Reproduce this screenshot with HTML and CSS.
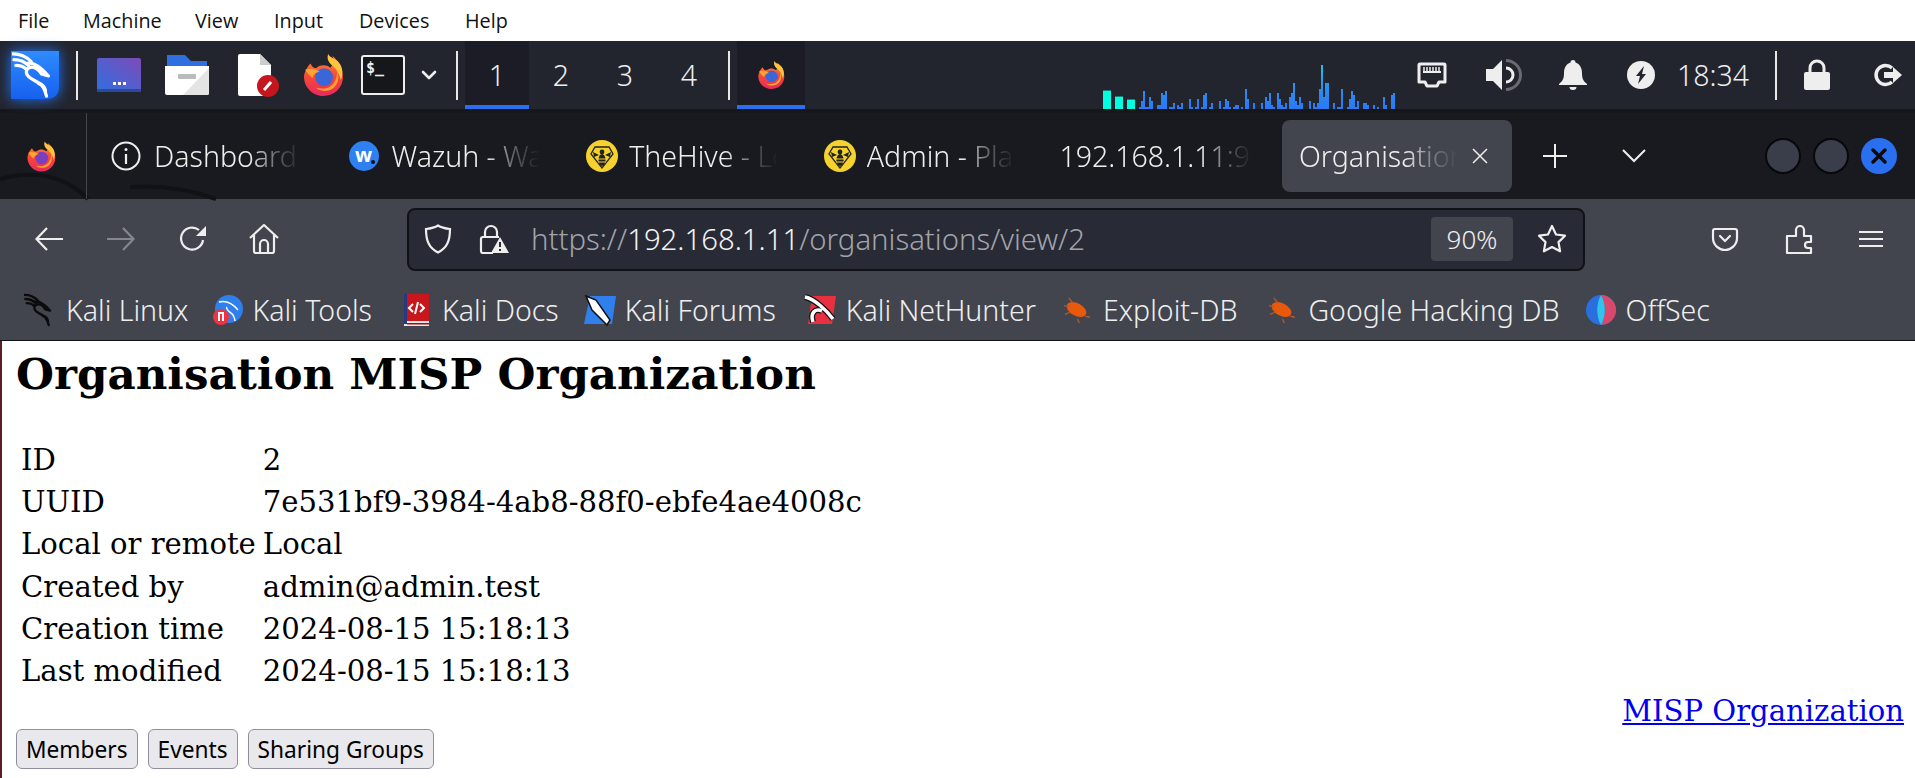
FILE: index.html
```html
<!DOCTYPE html>
<html lang="en">
<head>
<meta charset="utf-8">
<title>Organisation MISP Organization</title>
<link rel="stylesheet" href="styles.css">
</head>
<body>
<svg class="defs" width="0" height="0" aria-hidden="true">
  <defs>
    <linearGradient id="ffBody" x1="0" y1="0" x2="0" y2="1"><stop offset="0" stop-color="#ff8a2a"/><stop offset=".55" stop-color="#f5453a"/><stop offset="1" stop-color="#e8295f"/></linearGradient>
    <linearGradient id="launch" x1="0" y1="0" x2="0" y2="1"><stop offset="0" stop-color="#2f8bff"/><stop offset="1" stop-color="#1660ee"/></linearGradient>
    <linearGradient id="winGrad" x1="0" y1="1" x2="1" y2="0"><stop offset="0" stop-color="#2f6fe0"/><stop offset="1" stop-color="#7d4bb8"/></linearGradient>
    <linearGradient id="barGrad" gradientUnits="userSpaceOnUse" x1="0" y1="0" x2="0" y2="44"><stop offset="0" stop-color="#19c6ea"/><stop offset=".5" stop-color="#2a90f0"/><stop offset="1" stop-color="#2a78f5"/></linearGradient>
    <symbol id="firefox" viewBox="0 0 40 40">
      <path fill="url(#ffBody)" d="M2 20C1 31 10 40 20 40c11 0 19-8 19-18 0-8-4-15-10-20 2 5 1 8-2 11-4-3-9-3-13 0-2 1-4 0-6-4-3 3-5 7-6 11z"/>
      <path fill="#ffc43f" d="M25 0c-2 5 1 9 5 12 4 4 6 8 7 13 3-8 1-14-3-18-3-3-7-3-9-7z"/>
      <path fill="#ff9f2e" d="M33 15c3 6 2 14-4 18-5 3-12 3-16-1 6 2 13 1 17-4 3-4 4-9 3-13z"/>
      <circle class="ff-core" cx="21" cy="22" r="8.5"/>
      <path fill="#ffa52e" d="M3 15c5-2 10-1 14 2-3 0-6 2-7 6-3-3-5-5-7-8z"/>
    </symbol>
    <symbol id="dragon" viewBox="0 0 48 48">
      <g fill="none" stroke="currentColor" stroke-width="3.4" stroke-linecap="round" stroke-linejoin="round">
        <path d="M1 2c8 0 14 3 19 8M2 8c6 0 11 2 15 6M4 14c4 0 8 1 11 4"/>
        <path d="M15 12c8-2 15 4 23 13l-7-2c-3-5-8-8-12-7-4 1-5 5-3 8 3 5 11 6 15 11 3 3 4 7 5 11"/>
        <path d="M28 33c3 0 6 3 7 7"/>
      </g>
    </symbol>
    <symbol id="hive" viewBox="0 0 32 32">
      <circle cx="16" cy="16" r="16" fill="#f6d22f"/>
      <path fill="none" stroke="#222" stroke-width="1.3" d="M9 7h14l4 7-11 14L5 14z"/>
      <ellipse cx="16" cy="20" rx="3.600" ry="6" fill="#222"/>
      <path stroke="#f6d22f" stroke-width="1.2" d="M12 19h8M12 22h8"/>
      <path fill="#222" d="M13 15l-6-3 1 5zM19 15l6-3-1 5z"/>
      <circle cx="16" cy="12" r="2.400" fill="#222"/>
    </symbol>
    <symbol id="bug" viewBox="0 0 30 30">
      <ellipse cx="15" cy="15" rx="11" ry="6.5" fill="#e8590c" transform="rotate(28 15 15)"/>
      <path stroke="#a85a30" stroke-width="1.4" d="M2 11l5 1M7 3l4 5M16 25l2 4M24 22l5 1M3 20l5-2"/>
    </symbol>
  </defs>
</svg>

<header class="menubar">
  <span>File</span><span>Machine</span><span>View</span><span>Input</span><span>Devices</span><span>Help</span>
</header>

<div class="panel">
  <svg class="launcher" viewBox="0 0 48 48"><path fill="url(#launch)" d="M0 0h48v36c0 7-4 12-12 12H0z"/><use href="#dragon" width="46" height="46" x="1" y="1" color="#fff"/></svg>
  <i class="vsep sep-a"></i>
  <svg class="app app-win" viewBox="0 0 44 34"><rect width="44" height="34" rx="2" fill="url(#winGrad)"/><rect y="31" width="44" height="3" fill="#2b4b9a"/><path fill="#fff" d="M16 24h3v3h-3zM21 24h3v3h-3zM26 24h3v3h-3z"/></svg>
  <svg class="app app-folder" viewBox="0 0 44 40"><path fill="#2f6fe0" d="M2 0h18l6 6h16v10H2z"/><path fill="#fff" d="M0 11h44v27a2 2 0 0 1-2 2H2a2 2 0 0 1-2-2z"/><path fill="#e4e4e4" d="M44 13v25a2 2 0 0 1-2 2H18z"/><rect x="13" y="19" width="18" height="5" rx="1" fill="#bbb"/></svg>
  <svg class="app app-doc" viewBox="0 0 41 42"><path fill="#fff" d="M0 2a2 2 0 0 1 2-2h20l11 11v31H2a2 2 0 0 1-2-2z"/><path fill="#ccc" d="M22 0l11 11H22z"/><circle cx="30" cy="32" r="11" fill="#c4161c"/><path stroke="#fff" stroke-width="3" d="M26 36l7-8"/></svg>
  <svg class="app app-fox"><use href="#firefox"/></svg>
  <svg class="app app-term" viewBox="0 0 44 40"><rect x="1" y="1" width="42" height="38" rx="2" fill="#16171a" stroke="#eee" stroke-width="2"/><text x="5" y="18" class="term-text">$_</text></svg>
  <svg class="app app-chev" viewBox="0 0 16 10"><path fill="none" stroke="#eee" stroke-width="2.6" stroke-linecap="round" stroke-linejoin="round" d="M2 2l6 6 6-6"/></svg>
  <i class="vsep sep-b"></i>
  <nav class="workspaces"><span class="ws ws-on">1</span><span class="ws">2</span><span class="ws">3</span><span class="ws">4</span></nav>
  <i class="vsep sep-c"></i>
  <div class="task"><svg class="task-fox"><use href="#firefox"/></svg></div>
  <svg class="graph" viewBox="0 0 292 44">
    <path fill="#00ffe0" d="M0 44V26h8v18zM12 44V32h8v12zM24 44V35h8v9z"/>
    <path fill="#1c7f74" d="M0 25h8v1H0zM12 31h8v1h-8zM24 34h8v1h-8z"/>
    <path fill="url(#barGrad)" d="M36 44v-2h2v2zM38 44v-8h2v8zM40 44V26h2v18zM42 44v-2h2v2zM44 44v-2h2v2zM46 44V32h2v12zM48 44v-8h2v8zM54 44v-4h4v4zM58 44V28h2v16zM60 44V30h2v14zM62 44V26h2v18zM66 44v-2h4v2zM70 44v-6h2v6zM74 44v-4h2v4zM76 44v-2h2v2zM78 44v-6h2v6zM86 44V34h2v10zM88 44v-2h2v2zM92 44v-2h2v2zM94 44V34h2v10zM98 44v-2h2v2zM100 44V30h2v14zM102 44V28h2v16zM106 44v-2h2v2zM108 44v-6h2v6zM116 44v-8h2v8zM120 44v-2h2v2zM122 44V34h2v10zM124 44v-8h2v8zM126 44v-2h2v2zM130 44v-2h2v2zM132 44v-4h4v4zM138 44v-2h2v2zM142 44V24h2v20zM144 44V34h2v10zM150 44v-6h2v6zM158 44v-6h2v6zM162 44V32h2v12zM164 44v-8h2v8zM166 44V28h2v16zM168 44v-4h2v4zM170 44v-2h2v2zM174 44V28h2v16zM176 44V34h2v10zM178 44v-4h2v4zM180 44v-2h2v2zM182 44v-6h2v6zM186 44V32h2v12zM188 44V28h2v16zM190 44V18h2v26zM192 44v-8h2v8zM194 44v-4h2v4zM196 44V32h2v12zM198 44v-6h2v6zM206 44v-8h2v8zM210 44v-6h2v6zM212 44v-2h2v2zM214 44v-6h2v6zM216 44V24h2v20zM218 44V0h2v44zM220 44V32h2v12zM222 44V18h4v26zM230 44v-6h2v6zM234 44v-2h4v2zM238 44V24h2v20zM244 44v-2h2v2zM246 44V34h2v10zM248 44V26h2v18zM250 44V30h2v14zM252 44v-2h2v2zM254 44v-8h2v8zM260 44v-6h4v6zM264 44v-4h2v4zM270 44v-4h2v4zM274 44v-2h2v2zM280 44V32h2v12zM282 44v-4h2v4zM288 44V30h2v14zM290 44V28h2v16z"/>
  </svg>
  <svg class="tray tr-net" viewBox="0 0 30 26"><path fill="none" stroke="#eee" stroke-width="3" stroke-linejoin="round" d="M3 2h24a1 1 0 0 1 1 1v17h-6l-2 4H10l-2-4H2V3a1 1 0 0 1 1-1z"/><path stroke="#eee" stroke-width="1.5" d="M7 5v6M10 5v6M13 5v6M16 5v6M19 5v6M22 5v6"/><path stroke="#eee" stroke-width="2" d="M6 10h18"/></svg>
  <svg class="tray tr-vol" viewBox="0 0 35 32"><path fill="#eee" d="M0 10h7L16 1v30l-9-9H0z"/><path fill="none" stroke="#eee" stroke-width="3" d="M20 9a7 7 0 0 1 0 14"/><path fill="#6a6b70" d="M20 0a16 16 0 0 1 0 32v-3a13 13 0 0 0 0-26z"/></svg>
  <svg class="tray tr-bell" viewBox="0 0 28 30"><path fill="#eee" d="M14 0a2.500 2.500 0 0 1 2.500 2.500C21 4 23 8 23 13c0 5 1 8 5 11v1H0v-1c4-3 5-6 5-11 0-5 2-9 6.500-10.500A2.500 2.500 0 0 1 14 0zM10.500 27h7a3.500 3 0 0 1-7 0z"/></svg>
  <svg class="tray tr-power" viewBox="0 0 28 28"><circle cx="14" cy="14" r="14" fill="#eee"/><path fill="#23252e" d="M17 5l-8 10h4l-2 8 8-10h-4z"/></svg>
  <span class="clock">18:34</span>
  <i class="vsep sep-d"></i>
  <svg class="tray tr-lock" viewBox="0 0 26 30"><path fill="none" stroke="#eee" stroke-width="3" d="M6 14V8a7 7 0 0 1 14 0v6"/><rect y="12" width="26" height="18" rx="2" fill="#eee"/></svg>
  <svg class="tray tr-out" viewBox="0 0 29 24"><path fill="none" stroke="#eee" stroke-width="3.500" d="M19 5a9.500 9.500 0 1 0 0 14"/><path fill="#eee" d="M11 9h9V4l9 8-9 8v-5h-9z"/></svg>
</div>
<div class="panel-foot"></div>

<div class="titlebar">
  <svg class="wallpaper" viewBox="0 0 300 86" preserveAspectRatio="none"><path fill="none" stroke="#111216" stroke-width="4" d="M0 66c30-8 62-6 88 20M130 74c30-2 58 2 86 12"/></svg>
  <div class="fox-btn"><svg class="fox-tb"><use href="#firefox"/></svg></div>
  <div class="tabs">
    <div class="tab"><svg class="fav" viewBox="0 0 30 30"><circle cx="15" cy="15" r="13.500" fill="none" stroke="#eee" stroke-width="2"/><path stroke="#eee" stroke-width="2.200" d="M15 13v10"/><circle cx="15" cy="8.500" r="1.500" fill="#eee"/></svg><span class="tab-title">Dashboard | Wazuh</span></div>
    <div class="tab"><svg class="fav" viewBox="0 0 30 30"><circle cx="15" cy="15" r="15" fill="#2f80f0"/><text x="6" y="21" class="wz">w</text><circle cx="24" cy="21" r="2" fill="#111"/></svg><span class="tab-title">Wazuh - Wazuh</span></div>
    <div class="tab"><svg class="fav-hive"><use href="#hive"/></svg><span class="tab-title">TheHive - Login</span></div>
    <div class="tab"><svg class="fav-hive"><use href="#hive"/></svg><span class="tab-title">Admin - Platform</span></div>
    <div class="tab tab-plain"><span class="tab-title">192.168.1.11:9200/_cat</span></div>
    <div class="tab tab-on"><span class="tab-title">Organisation MISP</span><svg class="tab-x" viewBox="0 0 16 16"><path stroke="#eee" stroke-width="1.500" d="M1 1l14 14M15 1L1 15"/></svg></div>
  </div>
  <svg class="t-plus" viewBox="0 0 24 24"><path stroke="#eee" stroke-width="2" d="M12 0v24M0 12h24"/></svg>
  <svg class="t-chev" viewBox="0 0 24 14"><path fill="none" stroke="#eee" stroke-width="2" d="M1 1l11 11L23 1"/></svg>
  <i class="wbtn wbtn-a"></i><i class="wbtn"></i>
  <i class="wbtn wbtn-close"><svg viewBox="0 0 16 16"><path stroke="#0a0a0a" stroke-width="3.500" stroke-linecap="round" d="M2 2l12 12M14 2L2 14"/></svg></i>
</div>

<div class="navbar">
  <svg class="nav nav-back" viewBox="0 0 28 24"><path fill="none" stroke="#eee" stroke-width="2.200" d="M28 12H2M12 1L1.500 12 12 23"/></svg>
  <svg class="nav nav-fwd" viewBox="0 0 28 24"><path fill="none" stroke="#85878d" stroke-width="2.200" d="M0 12h26M16 1l10.500 11L16 23"/></svg>
  <svg class="nav nav-reload" viewBox="0 0 28 28"><path fill="none" stroke="#eee" stroke-width="2.200" d="M24 15a11 11 0 1 1-4-10"/><path fill="#eee" d="M27 1v10H17z"/></svg>
  <svg class="nav nav-home" viewBox="0 0 30 30"><path fill="none" stroke="#eee" stroke-width="2.200" stroke-linejoin="round" d="M1 14L15 1l14 13M5 11v16a2 2 0 0 0 2 2h16a2 2 0 0 0 2-2V11M11 29v-9a4 4 0 0 1 8 0v9"/></svg>
  <div class="urlbar">
    <svg class="url-shield" viewBox="0 0 30 30"><path fill="none" stroke="#eee" stroke-width="2.200" d="M15 1.500c3 2 7 3 12 3.500 0 12-3 19-12 23.500C6 24 3 17 3 5c5-.5 9-1.500 12-3.500z"/></svg>
    <svg class="url-lock" viewBox="0 0 30 30"><path fill="none" stroke="#eee" stroke-width="2.200" d="M6 13V8a6 6 0 0 1 12 0v5M14 29H4a2 2 0 0 1-2-2V15a2 2 0 0 1 2-2h16"/><path fill="#eee" d="M21 13l9 16H12z"/><path stroke="#2a2c38" stroke-width="2" d="M21 18v5M21 25v2"/></svg>
    <span class="url"><span class="dim">https://</span>192.168.1.11<span class="dim">/organisations/view/2</span></span>
    <span class="zoom">90%</span>
    <svg class="url-star" viewBox="0 0 30 30"><path fill="none" stroke="#eee" stroke-width="2.200" stroke-linejoin="round" d="M15 2l4 8.500 9 1.200-6.500 6.400 1.600 9.200L15 23l-8.100 4.300 1.600-9.200L2 11.700l9-1.200z"/></svg>
  </div>
  <svg class="nav nav-pocket" viewBox="0 0 26 24"><path fill="none" stroke="#eee" stroke-width="2.200" d="M3 2h20a2 2 0 0 1 2 2v7c0 7-6 12-12 12S1 18 1 11V4a2 2 0 0 1 2-2z"/><path fill="none" stroke="#eee" stroke-width="2.200" stroke-linecap="round" d="M8 9l5 5 5-5"/></svg>
  <svg class="nav nav-ext" viewBox="0 0 28 30"><path fill="none" stroke="#eee" stroke-width="2.200" stroke-linejoin="round" d="M2 12h9V6a4 4 0 0 1 8 0v6h7v6h-3a3 3 0 0 0 0 6h3v5H2z"/></svg>
  <svg class="nav nav-menu" viewBox="0 0 24 18"><path stroke="#eee" stroke-width="2.200" d="M0 2h24M0 9h24M0 16h24"/></svg>
</div>

<div class="bookmarks">
  <a class="bm"><svg class="bi bi-kali"><use href="#dragon" color="#0b0b0b"/></svg>Kali Linux</a>
  <a class="bm bm-tools"><svg class="bi bi-tools" viewBox="0 0 30 30"><ellipse cx="16" cy="14" rx="14" ry="14" fill="#2f80ed"/><path fill="none" stroke="#fff" stroke-width="1.500" d="M6 7c8-2 14 2 19 8M14 12c-2 3 4 5 6 8 1 2 2 4 2 6"/><circle cx="8" cy="22" r="8" fill="#ef3340"/><path stroke="#fff" stroke-width="2" d="M5 18h6M6 19v7M10 19v7"/></svg>Kali Tools</a>
  <a class="bm"><svg class="bi bi-docs" viewBox="0 0 25 32"><rect width="25" height="32" fill="#e8e8e8"/><rect x="3" width="22" height="27" fill="#c8161c"/><rect width="3" height="30" fill="#273a80"/><rect y="29" x="3" width="22" height="1.500" fill="#a01010"/><path fill="none" stroke="#fff" stroke-width="2" d="M9 10l-4 4 4 4M16 10l4 4-4 4M14 8l-3 12"/></svg>Kali Docs</a>
  <a class="bm bm-forums"><svg class="bi bi-forum" viewBox="0 0 32 32"><path fill="#2f80ed" d="M6 2h26l-4 28H0z"/><path fill="#fff" stroke="#111" stroke-width="1.500" d="M2 2l10 4 14 20-3 5L8 16z"/></svg>Kali Forums</a>
  <a class="bm bm-hunter"><svg class="bi bi-hunter" viewBox="0 0 32 32"><path fill="#e83040" d="M8 2h24l-4 28H4z"/><path fill="none" stroke="#111" stroke-width="6" d="M1 3c10 2 22 14 28 22M9 28c-3-9 2-14 9-11"/><path fill="none" stroke="#fff" stroke-width="3.500" d="M1 3c10 2 22 14 28 22M9 28c-3-9 2-14 9-11"/></svg>Kali NetHunter</a>
  <a class="bm bm-exploit"><svg class="bi bi-bug"><use href="#bug"/></svg>Exploit-DB</a>
  <a class="bm bm-ghdb"><svg class="bi bi-bug"><use href="#bug"/></svg>Google Hacking DB</a>
  <a class="bm"><svg class="bi bi-off" viewBox="0 0 30 30"><circle cx="15" cy="15" r="15" fill="#2a6fe0"/><path fill="#d9486a" d="M15 0a15 15 0 0 1 0 30c5-8 5-22 0-30z"/><path fill="#31c4e8" d="M15 0c-5 8-5 22 0 30 5-8 5-22 0-30z"/></svg>OffSec</a>
</div>

<main class="page">
  <h1>Organisation MISP Organization</h1>
  <table class="meta">
    <tr><td>ID</td><td>2</td></tr>
    <tr><td>UUID</td><td>7e531bf9-3984-4ab8-88f0-ebfe4ae4008c</td></tr>
    <tr><td>Local or remote</td><td>Local</td></tr>
    <tr><td>Created by</td><td>admin@admin.test</td></tr>
    <tr><td>Creation time</td><td>2024-08-15 15:18:13</td></tr>
    <tr><td>Last modified</td><td>2024-08-15 15:18:13</td></tr>
  </table>
  <div class="owner"><a href="#">MISP Organization</a></div>
  <div class="actions"><button>Members</button><button>Events</button><button>Sharing Groups</button></div>
</main>
</body>
</html>
```

FILE: styles.css
```css
* { box-sizing: border-box; }
html, body { margin: 0; height: 100%; overflow: hidden; background: #fff; }
body { font-family: "Noto Sans", sans-serif; display: flex; flex-direction: column; width: 1915px; height: 778px; }
.defs { position: absolute; }
svg { display: block; flex: none; overflow: visible; }
i { display: block; flex: none; }

.menubar { height: 41px; flex: none; display: flex; align-items: center; padding: 0 0 1px 18px; font-family: "Open Sans", sans-serif; font-size: 19.800px; color: #111; background: #fff; }
.menubar span:nth-child(1) { width: 65px; }
.menubar span:nth-child(2) { width: 112px; }
.menubar span:nth-child(3) { width: 79px; }
.menubar span:nth-child(4) { width: 85px; }
.menubar span:nth-child(5) { width: 106px; }

.panel { height: 68px; flex: none; display: flex; align-items: center; padding-left: 11px; background: #23252e; color: #eee; }
.panel-foot { height: 4px; flex: none; background: #16171b; }
.vsep { width: 2px; height: 49px; background: #e8e8e8; }
.launcher { width: 48px; height: 48px; filter: drop-shadow(0 0 7px #1e78ff); }
.sep-a { margin-left: 17px; }
.app-win { width: 44px; height: 34px; margin-left: 19px; }
.app-folder { width: 44px; height: 40px; margin-left: 24px; }
.app-doc { width: 41px; height: 42px; margin-left: 29px; }
.app-fox { width: 42px; height: 42px; margin-left: 23px; }
.ff-core { fill: var(--core, #3b66d8); }
.app-term { width: 44px; height: 40px; margin-left: 17px; }
.term-text { font-family: "DejaVu Sans Mono", monospace; font-size: 15px; font-weight: 700; fill: #eee; }
.app-chev { width: 16px; height: 10px; margin-left: 16px; }
.sep-b { margin-left: 19px; }
.workspaces { display: flex; margin-left: 7px; align-self: stretch; }
.ws { width: 64px; display: flex; align-items: center; justify-content: center; font-size: 28.500px; font-weight: 300; color: #eee; }
.ws-on { background: #1b1c25; border-bottom: 4px solid #2a6ff0; padding-top: 4px; }
.sep-c { margin-left: 7px; }
.task { width: 68px; margin-left: 7px; align-self: stretch; display: flex; align-items: center; justify-content: center; background: #1b1c25; border-bottom: 4px solid #2a6ff0; padding-top: 4px; }
.task-fox { width: 28px; height: 28px; }
.graph { width: 292px; height: 44px; margin-left: 298px; align-self: flex-end; }
.tr-net { width: 30px; height: 26px; margin-left: 22px; }
.tr-vol { width: 35px; height: 32px; margin-left: 39px; }
.tr-bell { width: 28px; height: 30px; margin-left: 38px; }
.tr-power { width: 28px; height: 28px; margin-left: 40px; }
.clock { width: 71px; margin-left: 22px; font-size: 28.500px; font-weight: 300; white-space: nowrap; line-height: 1; }
.sep-d { margin-left: 27px; }
.tr-lock { width: 26px; height: 30px; margin-left: 27px; }
.tr-out { width: 29px; height: 24px; margin-left: 43px; }

.titlebar { position: relative; height: 86px; flex: none; display: flex; align-items: center; background: #191a1f; color: #eee; }
.wallpaper { position: absolute; left: 0; top: 0; width: 300px; height: 86px; }
.fox-btn { position: relative; width: 87px; align-self: stretch; display: flex; align-items: center; padding-left: 26px; border-right: 1px solid #44464c; }
.fox-tb { width: 30px; height: 31px; --core: #7a3fc0; }
.tabs { position: relative; display: flex; gap: 8px; padding-left: 7px; }
.tab { width: 229.600px; height: 72px; padding: 0 13px 0 17px; display: flex; align-items: center; gap: 13px; border-radius: 8px; font-size: 28.500px; font-weight: 300; }
.tab-on { background: #42454e; gap: 0; padding-right: 24px; }
.tab-plain { padding-left: 15px; }
.fav { width: 30px; height: 30px; }
.fav-hive { width: 32px; height: 32px; margin-right: -2px; }
.wz { font-family: "Noto Sans", sans-serif; font-size: 20px; font-weight: 700; fill: #fff; }
.tab-title { flex: 1; min-width: 0; white-space: nowrap; overflow: hidden; -webkit-mask-image: linear-gradient(90deg, #000 calc(100% - 62px), rgba(0,0,0,.35) calc(100% - 34px), transparent calc(100% - 8px)); mask-image: linear-gradient(90deg, #000 calc(100% - 62px), rgba(0,0,0,.35) calc(100% - 34px), transparent calc(100% - 8px)); }
.tab-x { width: 16px; height: 16px; margin-left: 6px; }
.t-plus { position: relative; width: 24px; height: 24px; margin-left: 31px; }
.t-chev { position: relative; width: 24px; height: 14px; margin-left: 55px; }
.wbtn { position: relative; width: 36px; height: 36px; margin-left: 12px; border-radius: 50%; background: #3a3e4b; border: 2px solid #08080a; }
.wbtn-a { margin-left: 119px; }
.wbtn-close { background: #2a6ff0; border: 0; display: flex; align-items: center; justify-content: center; }
.wbtn-close svg { width: 16px; height: 16px; }

.navbar { height: 76px; flex: none; display: flex; align-items: center; background: #42454e; padding: 4px 0 0 35px; }
.nav-back { width: 28px; height: 24px; }
.nav-fwd { width: 28px; height: 24px; margin-left: 44px; }
.nav-reload { width: 28px; height: 28px; margin-left: 44px; }
.nav-home { width: 30px; height: 30px; margin-left: 42px; }
.urlbar { width: 1178px; height: 63px; margin-left: 128px; display: flex; align-items: center; background: #282a36; border: 2px solid #111217; border-radius: 8px; padding-left: 14px; }
.url-shield, .url-lock { width: 30px; height: 30px; }
.url-lock { margin-left: 26px; }
.url { margin-left: 22px; font-size: 29.300px; font-weight: 300; color: #f2f2f2; white-space: nowrap; }
.dim { color: #a2a4ab; }
.zoom { margin-left: auto; width: 82px; height: 44px; display: flex; align-items: center; justify-content: center; border-radius: 4px; background: #42454e; color: #eee; font-size: 26px; font-weight: 300; }
.url-star { width: 30px; height: 30px; margin: 0 16px 0 24px; }
.nav-pocket { width: 26px; height: 24px; margin-left: 127px; }
.nav-ext { width: 28px; height: 30px; margin-left: 47px; }
.nav-menu { width: 24px; height: 18px; margin-left: 46px; }

.bookmarks { height: 66px; flex: none; display: flex; align-items: center; gap: 25px; padding: 4px 0 0 24px; background: #42454e; border-bottom: 1px solid #101114; font-size: 28.500px; font-weight: 300; color: #eee; }
.bm { display: flex; align-items: center; white-space: nowrap; }
.bm-tools { margin-right: 7px; }
.bm-forums { margin-right: 3px; }
.bm-hunter { margin-right: 1px; }
.bm-exploit { margin-right: 5px; }
.bm-ghdb { margin-right: 1px; }
.bi { flex: none; }
.bi-kali { width: 33px; height: 34px; margin-right: 9px; }
.bi-tools { width: 30px; height: 30px; margin-right: 9px; }
.bi-docs { width: 25px; height: 32px; margin-right: 13px; }
.bi-forum { width: 32px; height: 32px; margin-right: 9px; }
.bi-hunter { width: 32px; height: 32px; margin-right: 10px; }
.bi-bug { width: 29px; height: 29px; margin-right: 12px; }
.bi-off { width: 30px; height: 30px; margin-right: 10px; }

.page { flex: 1; min-height: 0; padding: 0 11px 0 14px; border-left: 2px solid #5a1f26; background: #fff; font-family: "DejaVu Serif", serif; font-size: 29.100px; color: #000; }
h1 { margin: 8px 0 0; font-size: 43.600px; line-height: 50px; font-weight: 700; }
.meta { margin: 40px 0 0; border-collapse: collapse; }
.meta td { padding: 0 7px 0 5px; height: 42.200px; white-space: nowrap; line-height: 34px; }
.meta td:first-child { padding-right: 2px; }
.owner { text-align: right; line-height: 34px; margin-top: 2px; }
.owner a { color: #00e; text-decoration: underline; }
.actions { display: flex; gap: 10px; margin-top: 1px; }
.actions button { height: 40px; padding: 0 9px; font-family: "Noto Sans", sans-serif; font-size: 22.700px; font-weight: 400; color: #000; background: #e9e9ed; border: 1px solid #8f8f9d; border-radius: 6px; }
```
